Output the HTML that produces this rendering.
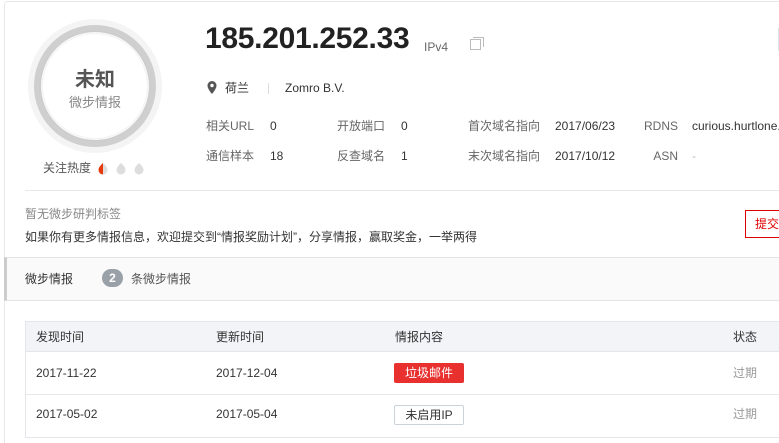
<!DOCTYPE html>
<html><head><meta charset="utf-8"><style>
*{margin:0;padding:0;box-sizing:border-box}
html,body{width:779px;height:443px;overflow:hidden}
body{background:#fff;font-family:"Liberation Sans","Noto Sans CJK SC",sans-serif;color:#333;position:relative}
.a{position:absolute;white-space:nowrap}
.g{color:#666}
.s{font-size:12px;line-height:14px}
</style></head><body>
<div class="a" style="left:4px;top:1px;width:790px;height:450px;border:1px solid #e8e8e8;border-radius:3px"></div>
<!-- circle -->
<div class="a" style="left:28px;top:19px;width:134px;height:134px;border-radius:50%;background:#f4f4f4"></div>
<div class="a" style="left:34px;top:25px;width:122px;height:122px;border-radius:50%;background:#fff;border:7px solid #cfcfcf"></div>
<div class="a" style="left:43px;top:34px;width:104px;height:104px;border-radius:50%;background:#fff;box-shadow:0 0 4px rgba(0,0,0,.12)"></div>
<div class="a" style="left:45px;top:63px;width:100px;text-align:center;font-size:20px;font-weight:bold;color:#555">未知</div>
<div class="a" style="left:45px;top:92px;width:100px;text-align:center;font-size:13px;color:#888">微步情报</div>
<div class="a s" style="left:43px;top:161px;color:#555">关注热度</div>
<svg class="a" style="left:97px;top:161px" width="52" height="14" viewBox="0 0 52 14">
<g><path d="M6 2 C8.5 4.5 10.5 6.5 10.5 9 A4.5 4.5 0 0 1 1.5 9 C1.5 6.5 3.5 4.5 6 2Z" fill="#ddd"/><path d="M6 2 C3.5 4.5 1.5 6.5 1.5 9 A4.5 4.5 0 0 0 6 13.5Z" fill="#e8380d"/></g>
<path d="M24 2 C26.5 4.5 28.5 6.5 28.5 9 A4.5 4.5 0 0 1 19.5 9 C19.5 6.5 21.5 4.5 24 2Z" fill="#ddd"/>
<path d="M42 2 C44.5 4.5 46.5 6.5 46.5 9 A4.5 4.5 0 0 1 37.5 9 C37.5 6.5 39.5 4.5 42 2Z" fill="#ddd"/>
</svg>
<!-- header -->
<div class="a" style="left:205px;top:22px;font-size:30px;font-weight:bold;color:#222;letter-spacing:-0.3px">185.201.252.33</div>
<div class="a s" style="left:424px;top:40px;color:#666">IPv4</div>
<svg class="a" style="left:469px;top:36px" width="16" height="16"><rect x="1.5" y="3.5" width="10" height="10" fill="none" stroke="#bbb"/><path d="M4 1.5H14.5V11" fill="none" stroke="#bbb"/></svg>
<div class="a" style="left:778px;top:28px;width:2px;height:23px;background:#dde3ea"></div>
<svg class="a" style="left:207px;top:81px" width="10" height="13" viewBox="0 0 10 13"><path d="M5 0A4.5 4.5 0 0 0 .5 4.5C.5 8 5 13 5 13S9.5 8 9.5 4.5A4.5 4.5 0 0 0 5 0Z" fill="#555"/><circle cx="5" cy="4.5" r="1.7" fill="#fff"/></svg>
<div class="a s" style="left:225px;top:81px">荷兰</div>
<div class="a" style="left:268px;top:83px;width:1px;height:11px;background:#ddd"></div>
<div class="a s" style="left:285px;top:81px">Zomro B.V.</div>
<div class="a s g" style="left:206px;top:119px">相关URL</div><div class="a s" style="left:270px;top:119px">0</div>
<div class="a s g" style="left:337px;top:119px">开放端口</div><div class="a s" style="left:401px;top:119px">0</div>
<div class="a s g" style="left:468px;top:119px">首次域名指向</div><div class="a s" style="left:555px;top:119px">2017/06/23</div>
<div class="a s g" style="left:640px;top:119px;width:38px;text-align:right">RDNS</div><div class="a s" style="left:692px;top:119px">curious.hurtlone.</div>
<div class="a s g" style="left:206px;top:149px">通信样本</div><div class="a s" style="left:270px;top:149px">18</div>
<div class="a s g" style="left:337px;top:149px">反查域名</div><div class="a s" style="left:401px;top:149px">1</div>
<div class="a s g" style="left:468px;top:149px">末次域名指向</div><div class="a s" style="left:555px;top:149px">2017/10/12</div>
<div class="a s g" style="left:640px;top:149px;width:38px;text-align:right">ASN</div><div class="a s" style="left:692px;top:149px;color:#bbb">-</div>
<div class="a" style="left:25px;top:190px;width:760px;height:1px;background:#e8e8e8"></div>
<div class="a s" style="left:25px;top:207px;color:#888">暂无微步研判标签</div>
<div class="a s" style="left:25px;top:230px;color:#333">如果你有更多情报信息，欢迎提交到“情报奖励计划”，分享情报，赢取奖金，一举两得</div>
<div class="a s" style="left:745px;top:210px;width:60px;height:28px;border:1px solid #d00;color:#d00;padding:6px 0 0 9px">提交</div>
<!-- tab band -->
<div class="a" style="left:4px;top:257px;width:780px;height:44px;background:#fafafa;border-top:1px solid #e4e4e4;border-bottom:1px solid #e4e4e4;border-left:3px solid #ccc"></div>
<div class="a s" style="left:25px;top:272px;color:#333">微步情报</div>
<div class="a" style="left:102px;top:269px;width:21px;height:18px;border-radius:9px;background:#9aa0a8;color:#fff;font-size:12px;font-weight:bold;text-align:center;line-height:18px">2</div>
<div class="a s" style="left:131px;top:272px;color:#555">条微步情报</div>
<!-- table -->
<div class="a" style="left:25px;top:321px;width:770px;height:117px;border:1px solid #e4e6ea"></div>
<div class="a" style="left:26px;top:322px;width:770px;height:30px;background:#f3f4f7;border-bottom:1px solid #e4e6ea"></div>
<div class="a" style="left:26px;top:394px;width:770px;height:1px;background:#e8e8e8"></div>
<div class="a s" style="left:36px;top:330px">发现时间</div>
<div class="a s" style="left:216px;top:330px">更新时间</div>
<div class="a s" style="left:395px;top:330px">情报内容</div>
<div class="a s" style="left:733px;top:330px">状态</div>
<div class="a s" style="left:36px;top:366px">2017-11-22</div>
<div class="a s" style="left:216px;top:366px">2017-12-04</div>
<div class="a s" style="left:394px;top:363px;width:70px;height:20px;background:#e8302f;color:#fff;text-align:center;line-height:20px;border-radius:2px">垃圾邮件</div>
<div class="a s" style="left:733px;top:366px;color:#999">过期</div>
<div class="a s" style="left:36px;top:407px">2017-05-02</div>
<div class="a s" style="left:216px;top:407px">2017-05-04</div>
<div class="a s" style="left:394px;top:405px;width:70px;height:20px;border:1px solid #ccd2da;color:#333;text-align:center;line-height:18px;border-radius:2px">未启用IP</div>
<div class="a s" style="left:733px;top:407px;color:#999">过期</div>
</body></html>
